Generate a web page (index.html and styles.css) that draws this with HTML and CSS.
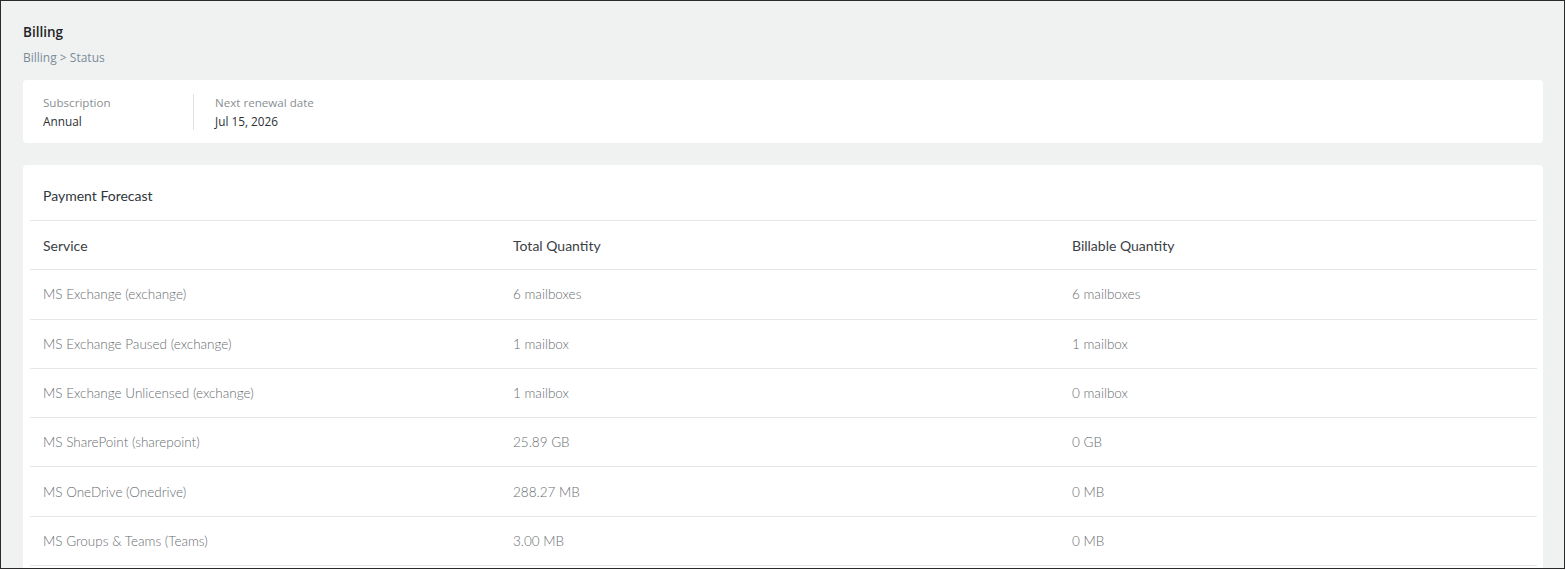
FILE: index.html
```html
<!DOCTYPE html>
<html lang="en">
<head>
  <meta charset="UTF-8">
  <meta name="viewport" content="width=device-width, initial-scale=1.0">
  <title>Billing - Status</title>
  <link rel="stylesheet" href="styles.css">
</head>
<body>
  <div class="frame">
    <!-- Page heading -->
    <h1 class="page-title">Billing</h1>
    <div class="breadcrumb">Billing &gt; Status</div>

    <!-- Subscription summary -->
    <div class="card summary">
      <div class="summary-item">
        <div class="summary-label">Subscription</div>
        <div class="summary-value">Annual</div>
      </div>
      <div class="summary-item">
        <div class="summary-label">Next renewal date</div>
        <div class="summary-value">Jul 15, 2026</div>
      </div>
    </div>

    <!-- Forecast table -->
    <div class="card forecast">
      <div class="forecast-title">Payment Forecast</div>
      <table class="forecast-table">
        <thead>
          <tr>
            <th class="col-service">Service</th>
            <th class="col-total">Total Quantity</th>
            <th>Billable Quantity</th>
          </tr>
        </thead>
        <tbody>
          <tr><td>MS Exchange (exchange)</td><td>6 mailboxes</td><td>6 mailboxes</td></tr>
          <tr><td>MS Exchange Paused (exchange)</td><td>1 mailbox</td><td>1 mailbox</td></tr>
          <tr><td>MS Exchange Unlicensed (exchange)</td><td>1 mailbox</td><td>0 mailbox</td></tr>
          <tr><td>MS SharePoint (sharepoint)</td><td>25.89 GB</td><td>0 GB</td></tr>
          <tr><td>MS OneDrive (Onedrive)</td><td>288.27 MB</td><td>0 MB</td></tr>
          <tr><td>MS Groups &amp; Teams (Teams)</td><td>3.00 MB</td><td>0 MB</td></tr>
        </tbody>
      </table>
    </div>
  </div>
</body>
</html>
```

FILE: styles.css
```css
body {
  margin: 0;
  padding: 0;
  background: #ffffff;
  font-family: "Open Sans", Arial, sans-serif;
  color: #333;
}

.frame {
  width: 1565px;
  height: 569px;
  box-sizing: border-box;
  border: 1px solid #2a2a2a;
  background: #f0f2f1;
  padding: 21px 21px 0 22px;
  overflow: hidden;
}

.page-title {
  margin: 0;
  font-size: 13.5px;
  font-weight: 600;
  line-height: 20px;
  color: #1f2428;
}

.breadcrumb {
  margin-top: 7px;
  font-size: 12px;
  line-height: 18px;
  color: #7b8c99;
}

.card {
  background: #fff;
  border-radius: 4px;
}

/* Summary card */
.summary {
  margin-top: 13px;
  height: 63px;
  box-sizing: border-box;
  padding: 14px 20px;
  display: flex;
  align-items: center;
}

.summary-item {
  padding-right: 20px;
}

.summary-item:first-child {
  width: 130px;
  border-right: 1px solid #dfe3e3;
  margin-right: 21px;
}

.summary-label {
  font-size: 11.6px;
  line-height: 18px;
  color: #8a8f93;
}

.summary-value {
  font-size: 11.8px;
  line-height: 18px;
  color: #2b3035;
}

/* Forecast card */
.forecast {
  margin-top: 22px;
  padding: 0 6px 20px 7px;
  font-family: Lato, "Open Sans", sans-serif;
}

.forecast-title {
  height: 56px;
  box-sizing: border-box;
  padding: 21px 13px 0;
  font-size: 14px;
  line-height: 20px;
  color: #30363b;
  border-bottom: 1px solid #e3e7e8;
}

.forecast-table {
  width: 100%;
  border-collapse: collapse;
  font-size: 14px;
}

.forecast-table th,
.forecast-table td {
  height: 48.3px;
  padding: 0 13px;
  text-align: left;
  border-bottom: 1px solid #e3e7e8;
  vertical-align: middle;
}

.forecast-table th {
  font-weight: 400;
  color: #3a4045;
}

.forecast-table td {
  font-size: 13.5px;
  font-weight: 300;
  color: #686d71;
}

.col-service {
  width: 444px;
}

.col-total {
  width: 533px;
}
```
